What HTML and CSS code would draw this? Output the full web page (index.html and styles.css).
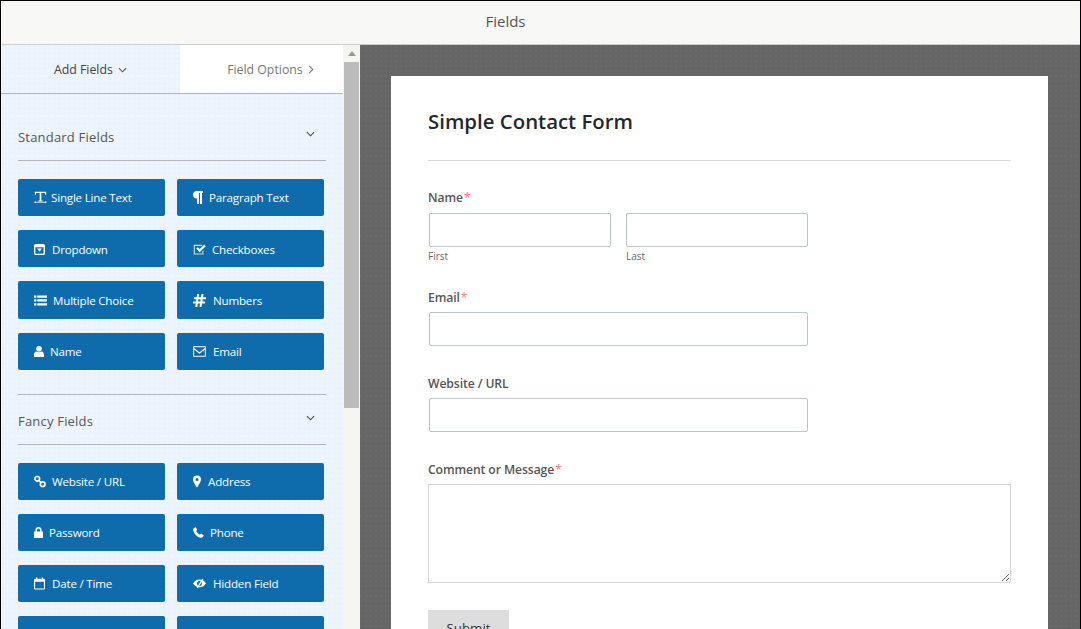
FILE: index.html
```html
<!DOCTYPE html>
<html>
  <head>
    <title>Fields</title>
    <link rel="stylesheet" href="styles.css">
  </head>
  <body>
    <div class="app">
      <header class="topbar">Fields</header>
      <div class="main">
        <aside class="sidebar">
          <div class="tabs">
            <div class="tab tab-active">Add Fields
              <svg class="chev" viewBox="0 0 10 6"><path d="M1 1l4 4 4-4"/></svg>
            </div>
            <div class="tab tab-other">Field Options
              <svg class="chev chev-right" viewBox="0 0 6 10"><path d="M1 1l4 4-4 4"/></svg>
            </div>
          </div>

          <section class="group">
            <div class="group-head">
              <span>Standard Fields</span>
              <svg class="chev" viewBox="0 0 10 6"><path d="M1 1l4 4 4-4"/></svg>
            </div>
            <div class="buttons">
              <a class="field-btn"><svg class="ico ico-tight" viewBox="0 0 16 14"><path d="M1 0h14v3.500h-1.300l-.5-2H9v9.300h1.500v1.200h-5v-1.200H7V1.500H2.800l-.5 2H1z"/><path d="M1.500 12.300h13v1H1.500z"/><path d="M0 12.800l2-1.400v2.800zM16 12.800l-2-1.400v2.800z"/></svg>Single Line Text</a>
              <a class="field-btn"><svg class="ico ico-s" viewBox="0 0 10 13"><path d="M4 0h6v2H9v11H7V2H6v11H4V7.500C1.500 7.500 0 6 0 3.800S1.500 0 4 0z"/></svg>Paragraph Text</a>
              <a class="field-btn"><svg class="ico ico-m" viewBox="0 0 12 12"><path fill-rule="evenodd" d="M2 0h8a2 2 0 012 2v8a2 2 0 01-2 2H2a2 2 0 01-2-2V2a2 2 0 012-2zm-.5 3.500V10c0 .300.200.500.500.500h8c.300 0 .500-.200.500-.500V3.500zm1.800 1.500h5.400L6 8.500z"/></svg>Dropdown</a>
              <a class="field-btn"><svg class="ico" viewBox="0 0 14 12"><path fill="#c6dcec" d="M1.500 1h8.500v1.200H2v8h8V8l1.200-1.200v4.700H.8V1z"/><path d="M3.500 5l1.700-1.500 2 2L12 1l1.700 1.600-6.500 6.400z"/></svg>Checkboxes</a>
              <a class="field-btn"><svg class="ico" viewBox="0 0 14 11"><path d="M0 0h2.500v2.500H0zM3.500 0H14v2.500H3.500zM0 4.200h2.500v2.500H0zM3.500 4.200H14v2.500H3.500zM0 8.500h2.500V11H0zM3.500 8.500H14V11H3.500z"/></svg>Multiple Choice</a>
              <a class="field-btn"><svg class="ico ico-wide" viewBox="0 0 13 13"><path d="M4.200 0h2l-.5 3.300h2.200L8.500 0h2L10 3.300h3v2h-3.300l-.3 2.300H12v2H9l-.5 3.400h-2l.5-3.400H4.800L4.300 13h-2l.5-3.400H0v-2h3.100l.3-2.300H1v-2h2.700zM5.400 5.300l-.3 2.300h2.200l.3-2.300z"/></svg>Numbers</a>
              <a class="field-btn"><svg class="ico ico-s" viewBox="0 0 10 11"><circle cx="5" cy="2.800" r="2.800"/><path d="M0 11V8.500C0 6.800 1 5.800 2.300 5.500c1.600 1 3.800 1 5.400 0C9 5.800 10 6.800 10 8.500V11z"/></svg>Name</a>
              <a class="field-btn"><svg class="ico ico-wide" viewBox="0 0 13 11"><path fill="#c6dcec" fill-rule="evenodd" d="M1 0h11a1 1 0 011 1v9a1 1 0 01-1 1H1a1 1 0 01-1-1V1a1 1 0 011-1zm.2 1.200v8.600h10.600V1.200z"/><path d="M1 2l5.500 4.300L12 2v1.500L6.500 7.800 1 3.500z"/></svg>Email</a>
            </div>
          </section>

          <section class="group group-next">
            <div class="group-head">
              <span>Fancy Fields</span>
              <svg class="chev" viewBox="0 0 10 6"><path d="M1 1l4 4 4-4"/></svg>
            </div>
            <div class="buttons">
              <a class="field-btn"><svg class="ico ico-12" viewBox="0 0 12 12"><path fill="none" stroke="#fff" stroke-width="1.700" d="M3.300 1a2.300 2.300 0 110 4.600 2.300 2.300 0 010-4.600zM8.700 6.400a2.300 2.300 0 110 4.600 2.300 2.300 0 010-4.600zM4.500 4.500l3 3"/></svg>Website / URL</a>
              <a class="field-btn"><svg class="ico ico-xs" viewBox="0 0 8 12"><path fill-rule="evenodd" d="M4 0a4 4 0 014 4c0 2-2.500 6-4 8-1.500-2-4-6-4-8a4 4 0 014-4zm0 2.500a1.500 1.500 0 100 3 1.500 1.500 0 000-3z"/></svg>Address</a>
              <a class="field-btn"><svg class="ico ico-9" viewBox="0 0 9 11"><path fill-rule="evenodd" d="M1.500 4.500V3a3 3 0 016 0v1.500H9V11H0V4.500zm1.500 0h3V3a1.500 1.500 0 00-3 0z"/></svg>Password</a>
              <a class="field-btn"><svg class="ico ico-11" viewBox="0 0 11 11"><path d="M2.700.3l1.500 2.400-1 1.200c.6 1.500 2.100 3 3.600 3.700l1.300-1 2.500 1.600c.2.800-.9 2.500-2.600 2.500C4.300 10.700.2 6.400.2 2.800.2 1.300 1.800.2 2.700.3z"/></svg>Phone</a>
              <a class="field-btn"><svg class="ico ico-m" viewBox="0 0 11 12"><path fill-rule="evenodd" d="M2 0h1.300v1.300h4.400V0H9v1.300h1a1 1 0 011 1V11a1 1 0 01-1 1H1a1 1 0 01-1-1V2.300a1 1 0 011-1h1zM1.100 4.200v6.700h8.800V4.200z"/></svg>Date / Time</a>
              <a class="field-btn"><svg class="ico ico-wide" viewBox="0 0 14 10"><path fill-rule="evenodd" d="M7 .8c2.800 0 5.400 1.700 7 4.200-1.600 2.500-4.200 4.200-7 4.200S1.600 7.500 0 5C1.600 2.500 4.200.8 7 .8zM7 2.300a2.700 2.700 0 100 5.400 2.700 2.700 0 000-5.400z"/><path d="M10 0l1.200.7L5.200 10 4 9.300z"/></svg>Hidden Field</a>
              <a class="field-btn"></a>
              <a class="field-btn"></a>
            </div>
          </section>
        </aside>

        <div class="scrollbar">
          <svg class="scroll-arrow" viewBox="0 0 8 5"><path d="M4 0l4 5H0z"/></svg>
          <div class="scroll-thumb"></div>
        </div>

        <main class="canvas">
          <form class="form-card">
            <h1 class="form-title">Simple Contact Form</h1>

            <div class="form-group group-name">
              <label>Name<span class="req">*</span></label>
              <div class="name-row">
                <div class="name-col">
                  <input type="text">
                  <small>First</small>
                </div>
                <div class="name-col">
                  <input type="text">
                  <small>Last</small>
                </div>
              </div>
            </div>

            <div class="form-group group-email">
              <label>Email<span class="req">*</span></label>
              <input class="input-mid" type="text">
            </div>

            <div class="form-group group-url">
              <label>Website / URL</label>
              <input class="input-mid" type="text">
            </div>

            <div class="form-group group-msg">
              <label>Comment or Message<span class="req">*</span></label>
              <textarea></textarea>
            </div>

            <button class="submit" type="button">Submit</button>
          </form>
        </main>
      </div>
    </div>
  </body>
</html>
```

FILE: styles.css
```css
* {
  box-sizing: border-box;
}

html,
body {
  height: 100%;
  margin: 0;
  overflow: hidden;
}

body {
  font-family: "Open Sans", "Noto Sans", Arial, sans-serif;
  color: #444;
}

.app {
  height: 629px;
  border: solid #000;
  border-width: 1px 1px 0 1px;
  display: flex;
  flex-direction: column;
  overflow: hidden;
}

.topbar {
  height: 44px;
  flex: none;
  background: #f8f8f6;
  border-bottom: 1px solid #ccc;
  text-align: center;
  font-size: 15px;
  line-height: 41px;
  color: #555;
  padding-right: 70px;
}

.main {
  flex: 1;
  display: flex;
  min-height: 0;
}

/* left panel */
.sidebar {
  width: 342px;
  flex: none;
  background-color: #ebf3fc;
  background-image: radial-gradient(circle at 1px 1px, #eff6fd 1px, transparent 1px);
  background-size: 5px 5px;
  overflow: hidden;
}

.tabs {
  display: flex;
  height: 49px;
  border-bottom: 1px solid #b0b5ba;
}

.tab {
  width: 179px;
  font-size: 12.3px;
  line-height: 50px;
  text-align: center;
  color: #444;
}

.tab-other {
  flex: 1;
  background: #fff;
  color: #777;
  padding-left: 18px;
}

.chev {
  width: 9px;
  height: 6px;
  margin-left: 2px;
  vertical-align: 1px;
  fill: none;
  stroke: #555;
  stroke-width: 1.2;
}

.chev-right {
  width: 6px;
  height: 9px;
  vertical-align: 0;
  stroke: #777;
}

.group {
  margin: 0 17px 0 17px;
}

.group-head {
  height: 67px;
  padding: 33px 11px 0 0;
  border-bottom: 1px solid #b4b6b9;
  display: flex;
  justify-content: space-between;
  font-size: 13px;
  line-height: 20px;
  letter-spacing: 0.2px;
  color: #555;
}

.group-head .chev {
  margin-top: 4px;
  stroke: #444;
}

.group-next {
  margin-top: 24px;
  border-top: 1px solid #b4b6b9;
}

.group-next .group-head {
  height: 50px;
  padding-top: 16px;
}

.buttons {
  display: grid;
  grid-template-columns: 147px 147px;
  column-gap: 12px;
  grid-auto-rows: 37.2px;
  row-gap: 14px;
  padding-top: 18px;
}

.field-btn {
  background: #0e6cad;
  border-radius: 2px;
  color: #fff;
  font-size: 11.6px;
  letter-spacing: -0.2px;
  display: flex;
  align-items: center;
  padding: 0.5px 0 0 16px;
}

.ico {
  width: 13px;
  height: 13px;
  margin-right: 6px;
  fill: #fff;
  flex: none;
}

.ico-tight {
  margin-right: 4px;
}

.ico-wide {
  margin-right: 7px;
}

.ico-12 {
  width: 12px;
}

.ico-11 {
  width: 11px;
}

.ico-m {
  width: 11px;
  margin-right: 7px;
}

.ico-s {
  width: 10px;
}

.ico-9 {
  width: 9px;
}

.ico-xs {
  width: 8px;
  margin-right: 7px;
}

/* scrollbar */
.scrollbar {
  width: 17px;
  flex: none;
  background: #f5f5f2;
  padding: 0 1px 0 1px;
}

.scroll-arrow {
  display: block;
  width: 8px;
  height: 5px;
  margin: 6px auto 6px;
  fill: #999;
}

.scroll-thumb {
  height: 346px;
  background: #bbb;
}

/* form preview */
.canvas {
  flex: 1;
  background-color: #666;
  background-image: radial-gradient(circle at 1px 1px, #6a6a6a 1px, transparent 1px);
  background-size: 5px 5px;
  padding: 31px 32px 0 31px;
  overflow: hidden;
}

.form-card {
  background: #fff;
  height: 600px;
  padding: 29px 37px 0 37px;
}

.form-title {
  margin: 0;
  height: 56px;
  font-size: 20.4px;
  font-weight: 600;
  line-height: 32px;
  color: #23282d;
  border-bottom: 1px solid #d5d9dc;
}

.form-group label {
  display: block;
  font-size: 12.2px;
  font-weight: 600;
  line-height: 17px;
  color: #555;
  letter-spacing: -0.1px;
}

.req {
  color: #f77;
  font-weight: 400;
  margin-left: 1px;
}

input {
  display: block;
  height: 34px;
  margin: 0 0 0 1px;
  background: #fff;
  border: 1px solid #b9c6cc;
  border-radius: 2px;
}

.group-name {
  margin-top: 28px;
}

.group-name label {
  margin-bottom: 7px;
}

.name-row {
  display: flex;
  gap: 15px;
}

.name-col {
  width: 182px;
}

.name-col input {
  width: 182px;
}

.name-col + .name-col small {
  margin-left: 1px;
}

small {
  display: block;
  font-size: 10px;
  line-height: 14px;
  margin-top: 2px;
  color: #666;
}

.input-mid {
  width: 379px;
}

.group-email {
  margin-top: 26px;
}

.group-email label,
.group-url label {
  margin-bottom: 6px;
}

.group-url {
  margin-top: 29px;
}

.group-msg {
  margin-top: 29px;
}

.group-msg label {
  margin-bottom: 6px;
}

textarea {
  display: block;
  width: 583px;
  height: 99px;
  border: 1px solid #d4d4d4;
  border-radius: 0;
  background: #fff;
}

.submit {
  display: block;
  width: 81px;
  height: 36px;
  margin-top: 27px;
  background: #ddd;
  border: 0;
  font-family: inherit;
  font-size: 13.3px;
  color: #333;
}
```
